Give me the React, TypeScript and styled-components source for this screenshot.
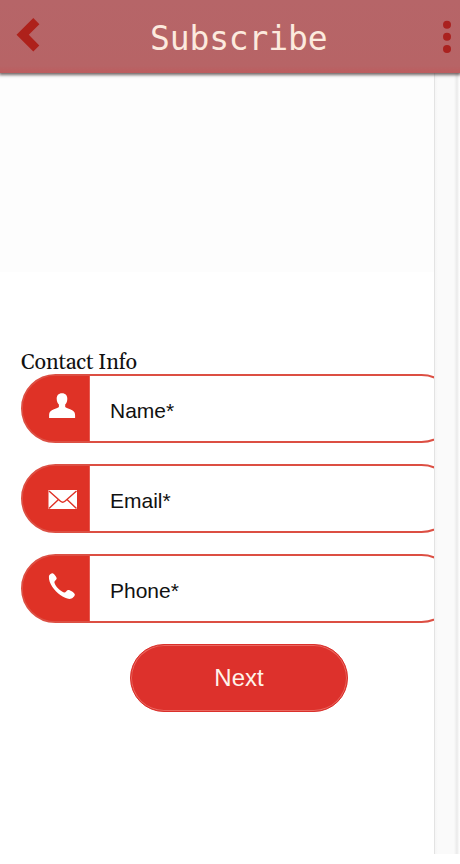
import React from "react";
import styled, { createGlobalStyle } from "styled-components";

const GlobalStyle = createGlobalStyle`
  *, *::before, *::after { box-sizing: border-box; }
  html, body { margin: 0; padding: 0; background: #fff; overflow: hidden; }
`;

const Screen = styled.div`
  width: 460px;
  height: 864px;
  display: flex;
  flex-direction: column;
  overflow: hidden;
  background: #fff;
  font-family: "Liberation Sans", Arial, sans-serif;
`;

const Header = styled.header`
  position: relative;
  z-index: 1;
  flex: none;
  height: 73px;
  display: grid;
  grid-template-columns: 45px 1fr 27px;
  background: linear-gradient(#b66568 0, #b76466 66px, #bd5c5e 73px);
  box-shadow: 0 1px 3px 1px rgba(65, 50, 50, 0.75);
`;

const IconButton = styled.button`
  padding: 0;
  border: 0;
  background: none;
  display: block;
  svg { display: block; }
`;

const Title = styled.h1`
  margin: 0;
  padding: 19px 0 0 105px;
  color: #fceade;
  font: 400 33px/40px "DejaVu Sans Mono", monospace;
  letter-spacing: -0.15px;
`;

const Body = styled.main`
  display: flex;
  height: 781px;
`;

const Content = styled.section`
  width: 434px;
  padding: 276px 0 0 21px;
  overflow: hidden;
  background: linear-gradient(#fdfdfd 199px, #fff 199px);
`;

const Gutter = styled.div`
  width: 26px;
  border-left: 1px solid #e3e3e3;
  background: linear-gradient(90deg, #f5f5f5 0, #fafafa 3px, #fafafa 19px, #eaeaea 22px, #fafafa 24px, #fdfdfd 25px);
`;

const SectionLabel = styled.h2`
  margin: 0;
  height: 25px;
  padding-top: 1px;
  color: #111;
  white-space: nowrap;
  font: 400 21.5px/25px Gelasio, Georgia, "Liberation Serif", serif;
  letter-spacing: -0.2px;
`;

const Form = styled.form`
  display: flex;
  flex-direction: column;
  gap: 21px;
  width: 435px;
`;

const Field = styled.label`
  height: 69px;
  display: flex;
  overflow: hidden;
  border: 2px solid #dc4f43;
  border-radius: 35px;
  background: linear-gradient(90deg, #df3226 67px, #fff 67px);
`;

const IconCell = styled.span`
  width: 67px;
  flex: none;
  background: #df3226;
  border-right: 1px solid #e65a50;
  svg { display: block; }
`;

const FieldText = styled.span`
  flex: 1;
  padding: 1px 0 0 20px;
  color: #111;
  font-size: 21px;
  line-height: 68px;
`;

const NextButton = styled.button`
  width: 218px;
  height: 68px;
  margin-left: 109px;
  padding: 0;
  border: 1px solid #db302b;
  border-radius: 34px;
  background: #dd312c;
  box-shadow: inset 0 0 0 1px #e9675f;
  color: #fff3ea;
  font: 400 24px/30px "Liberation Sans", Arial, sans-serif;
`;

const PersonIcon = () => (
  <svg width="66" height="65" viewBox="23 376 66 65" fill="#fff">
    <path d="M62 393.3c-3.6 0-5.4 2.4-5.3 5.7.1 2.5.9 4.3 2.2 5.6v2.5c-1 1.3-4.4 1.9-7 3.2-2.1 1-2.8 2.8-2.8 5V418h26v-2.7c0-2.2-.8-4-2.9-5-2.6-1.3-6-1.9-7-3.2v-2.5c1.3-1.3 2-3.1 2.1-5.6.1-3.3-1.7-5.7-5.3-5.7Z" />
  </svg>
);

const MailIcon = () => (
  <svg width="66" height="65" viewBox="23 466 66 65">
    <path fill="#fff" d="M48.5 490h28.5v19H48.5z" />
    <path fill="none" stroke="#df3226" strokeWidth="1.4" d="m49 491 11.5 10.3q2.2 1.9 4.4 0L76.5 491M49 508.5l9.5-9M76.5 508.5l-9.5-9" />
  </svg>
);

const PhoneIcon = () => (
  <svg width="66" height="65" viewBox="23 556 66 65" fill="#fff">
    <path d="M48.9 576.5c0-1.5 2.7-3.5 4.1-3.1 1.3.5 3.8 3.7 3.7 5-.1 1.5-2.7 2.6-2.3 4.2 1.3 4.4 5.6 8.4 9.6 9.8 1.6.5 2.4-2.2 4-2.5 1.8-.3 6.5 2.7 6.8 4.4.3 1.8-2.4 4.2-4 4.5-2 .4-3.7-.1-5.7-1-6.5-2.9-12.9-9.4-15.4-16-.6-1.7-.9-3.7-.8-5.3Z" />
  </svg>
);

const fields = [
  { label: "Name*", Icon: PersonIcon },
  { label: "Email*", Icon: MailIcon },
  { label: "Phone*", Icon: PhoneIcon },
];

export default function App() {
  return (
    <>
      <GlobalStyle />
      <Screen>
        <Header>
          <IconButton aria-label="Back">
            <svg width="45" height="73" viewBox="0 0 45 73">
              <path fill="#ae211b" d="M33.3 18 16.5 34.7 33.3 51.5l6-6L28.8 34.8 39.4 24.2Z" />
            </svg>
          </IconButton>
          <Title>Subscribe</Title>
          <IconButton aria-label="More options">
            <svg width="27" height="73" viewBox="433 0 27 73" fill="#aa211f">
              <circle cx="447" cy="24.8" r="4" />
              <circle cx="447" cy="36.8" r="4" />
              <circle cx="447" cy="49" r="4" />
            </svg>
          </IconButton>
        </Header>
        <Body>
          <Content>
            <SectionLabel>Contact Info</SectionLabel>
            <Form>
              {fields.map(({ label, Icon }) => (
                <Field key={label}>
                  <IconCell><Icon /></IconCell>
                  <FieldText>{label}</FieldText>
                </Field>
              ))}
              <NextButton type="button">Next</NextButton>
            </Form>
          </Content>
          <Gutter />
        </Body>
      </Screen>
    </>
  );
}
